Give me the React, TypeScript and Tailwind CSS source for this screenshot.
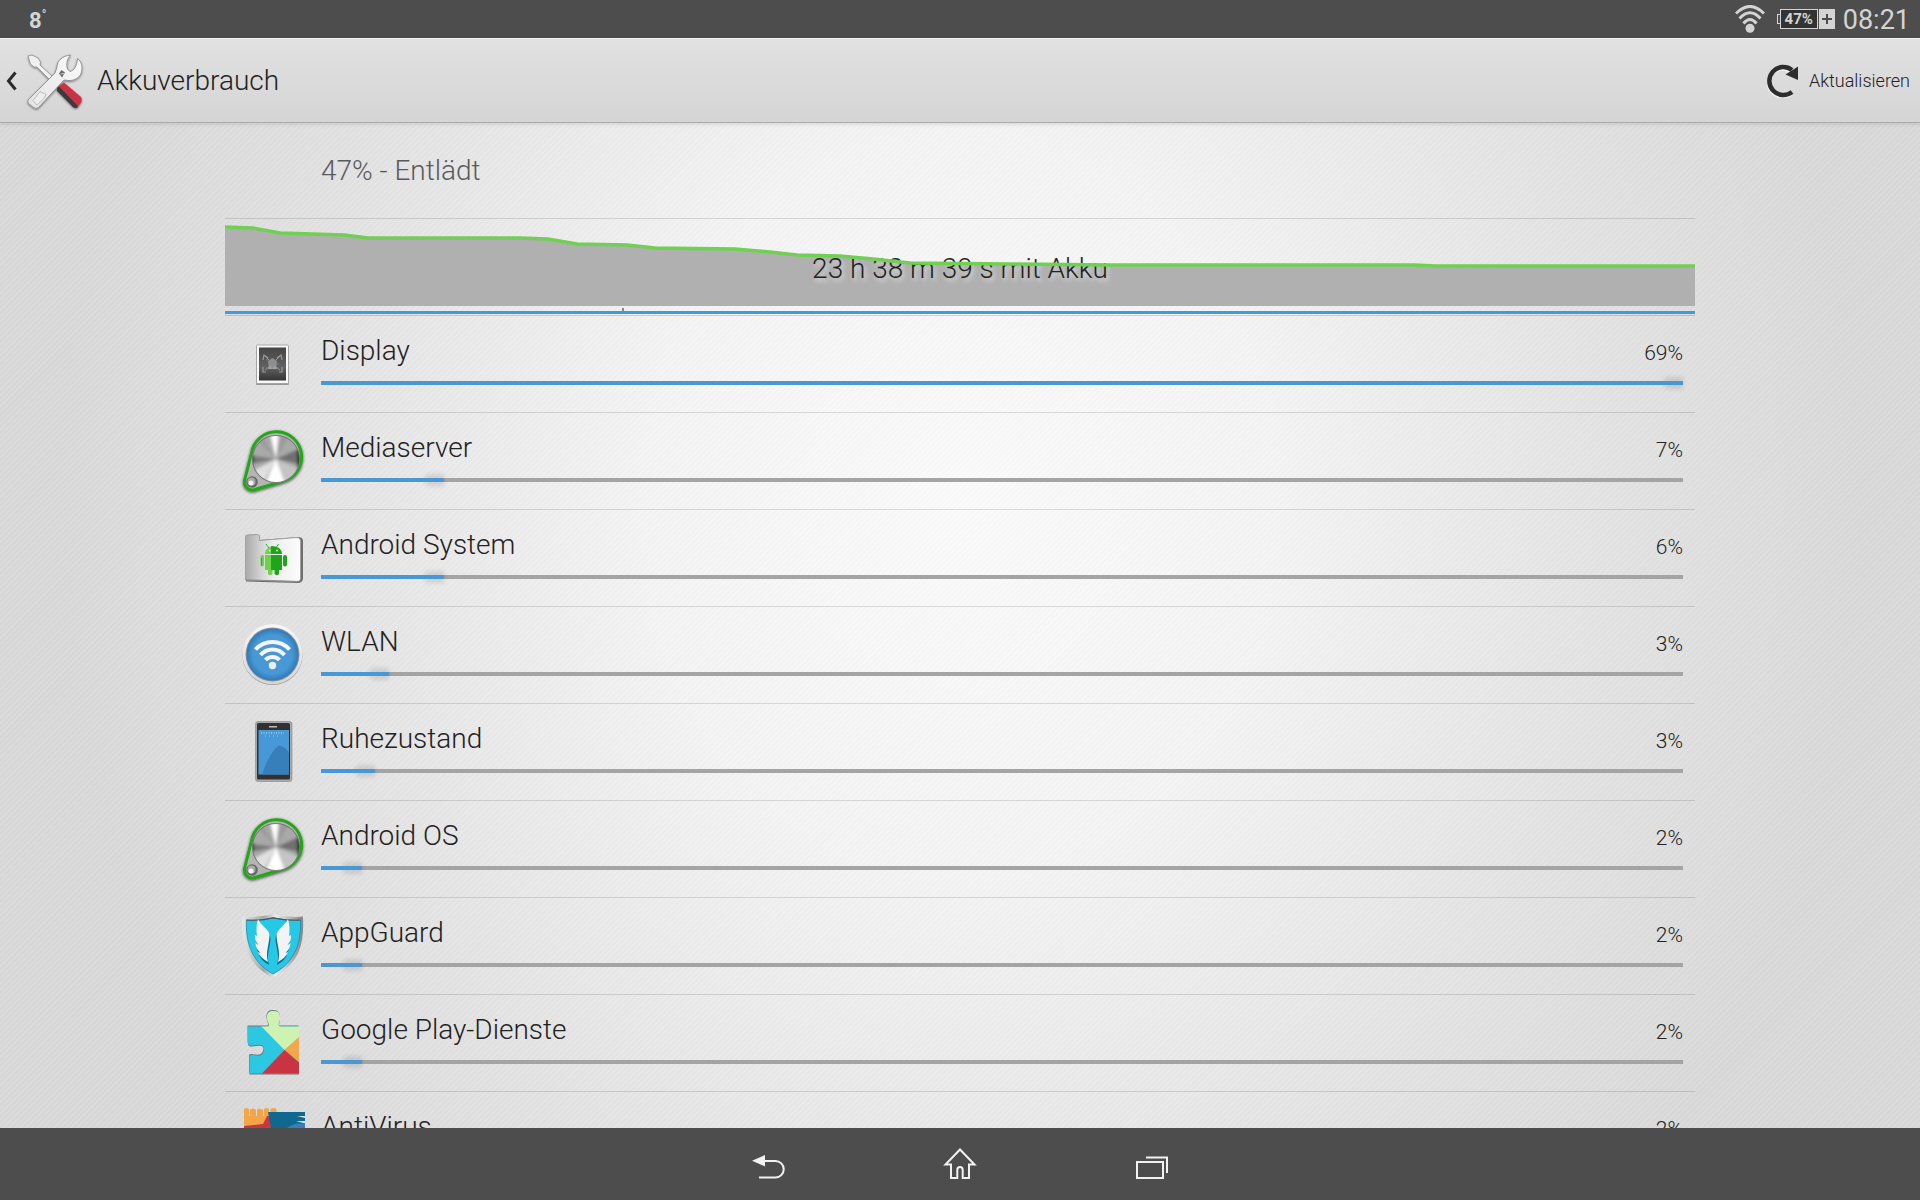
import React from "react";

type IconProps = { className?: string };

function ToolsIcon() {
  return (
    <svg viewBox="0 0 64 64" className="size-16" aria-hidden="true">
      <defs>
        <linearGradient id="steel" x1="0" y1="1" x2="1" y2="0">
          <stop offset="0" stopColor="#e2e2e2" />
          <stop offset="1" stopColor="#fbfbfb" />
        </linearGradient>
        <filter id="toolShadow" x="-20%" y="-20%" width="140%" height="140%">
          <feDropShadow dx="0" dy="1" stdDeviation="1" floodOpacity="0.45" />
        </filter>
      </defs>
      <g filter="url(#toolShadow)">
        <path d="M4 7 L8 6 L14 9 L16.500 13 L16 16 L28 27 L25 30 L13 18 L10 18 L6.500 15 Z" fill="#f0f0f0" stroke="#8d8d8d" strokeWidth="0.8" />
        <path d="M33 38 L40 33.500 L57 48 Q58.500 50 57.500 53 L54 58 Q51.500 60 49 58 Z" fill="#cb3244" />
        <path d="M33 38 L35 37.500 L52 55 L54 58 Q51.500 60 49 58 L33 42 Z" fill="#3a3a3a" />
        <path
          d="M33 18 C33 12 38 7 46.500 6 C43 10 42 15 43.500 20 L46 22.500 C50 21.500 53 17 53.500 9.500 C58 13 58.500 18 57.500 23 C56 29 50 32 44 31.500 L40 31 L14.500 58.500 Q12 60.500 9.500 58.500 L4.500 54.500 Q3 52.500 4.500 50.500 L31 24 Z"
          fill="url(#steel)"
          stroke="#8a8a8a"
          strokeWidth="0.9"
        />
        <path d="M9 51.500 L16 42.500 L22 45.500 L20.500 49 L13 56 Z" fill="#ededed" stroke="#b8b8b8" strokeWidth="0.9" />
        <path d="M35 24.500 L37.500 21 L41 23.500 L38 28.500 Z" fill="#6b6b6b" />
        <path d="M36.500 25 L40 24.500" stroke="#ccc" strokeWidth="1" />
      </g>
    </svg>
  );
}

function DisplayIcon({ className }: IconProps) {
  return (
    <svg viewBox="0 0 64 64" className={className} aria-hidden="true">
      <defs>
        <linearGradient id="panel" x1="0" y1="0" x2="0" y2="1">
          <stop offset="0" stopColor="#454545" />
          <stop offset="0.6" stopColor="#626262" />
          <stop offset="1" stopColor="#333" />
        </linearGradient>
      </defs>
      <rect x="15" y="14" width="33" height="39" rx="1" fill="#777" opacity="0.7" />
      <rect x="15.500" y="13" width="32" height="38.500" rx="1" fill="#f8f8f8" stroke="#9a9a9a" strokeWidth="0.8" />
      <rect x="18" y="15.500" width="27" height="33" fill="url(#panel)" />
      <g fill="none" stroke="#9a9a9a" strokeWidth="1.200">
        <path d="M22 28 L23 23 L27 26 M41 28 L40 23 L36 26 M41 35 V40 H38 M25 40 H22 V35" />
        <path d="M24 24 L28 28 M39 24 L35 28 M24 38 L28 35 M39 38 L35 35" strokeWidth="1" />
      </g>
      <path d="M27 29 L31.500 26 L36 29 L35.500 34 L31.500 37 L27.500 34 Z" fill="#8e8e8e" />
      <path d="M27 37 L29 33 L31.500 37 L34 33 L36 37 Z" fill="#a2a2a2" />
      <path d="M26 27 V29 M37 31 V33 M26 35 V36" stroke="#4c8ec4" strokeWidth="1" />
    </svg>
  );
}

function ProcessIcon({ className }: IconProps) {
  return (
    <svg viewBox="0 0 64 64" className={className} overflow="visible" aria-hidden="true">
      <defs>
        <clipPath id="knob">
          <circle cx="35" cy="30" r="23.500" />
        </clipPath>
        <filter id="knobBlur" x="-20%" y="-20%" width="140%" height="140%">
          <feGaussianBlur stdDeviation="1.800" />
        </filter>
        <filter id="knobShadow" x="-20%" y="-20%" width="140%" height="140%">
          <feDropShadow dx="0" dy="1" stdDeviation="1.500" floodOpacity="0.7" />
        </filter>
      </defs>
      <path
        d="M10.500 24 A25.200 25.200 0 1 1 41 52.500 L13 60.800 A8 8 0 0 1 3.700 51 Z"
        fill="#b4b4b4"
        stroke="#21a816"
        strokeWidth="3"
        strokeLinejoin="round"
        filter="url(#knobShadow)"
      />
      <circle cx="35" cy="30" r="24" fill="#858585" />
      <g clipPath="url(#knob)">
        <g filter="url(#knobBlur)">
          <rect x="5" y="0" width="60" height="60" fill="#a9a9a9" />
          <path d="M35 30 L62 18 V36 Z" fill="#707070" />
          <path d="M35 30 L6 26 V36 Z" fill="#777" />
          <path d="M35 30 L8 2 H18 Z" fill="#9a9a9a" />
          <path d="M35 30 L28 0 H38 Z" fill="#fff" />
          <path d="M35 30 L42 0 H52 Z" fill="#9a9a9a" />
          <path d="M35 30 L62 42 L46 60 Z" fill="#c4c4c4" />
          <path d="M35 30 L46 60 H22 Z" fill="#fff" />
          <path d="M35 30 L20 58 L8 44 Z" fill="#e0e0e0" />
          <path d="M56 20 H60 V38 H56 Z" fill="#333" />
          <path d="M10 26 H13 V34 H10 Z" fill="#444" />
        </g>
      </g>
      <circle cx="35" cy="30" r="23.500" fill="none" stroke="#6f6f6f" strokeWidth="0.8" />
      <circle cx="11" cy="53" r="5.800" fill="#666" />
      <circle cx="10.500" cy="52.500" r="4" fill="#aaa" />
      <circle cx="10" cy="54" r="2.500" fill="#f2f2f2" />
    </svg>
  );
}

function FolderIcon({ className }: IconProps) {
  return (
    <svg viewBox="0 0 64 64" className={className} aria-hidden="true">
      <defs>
        <linearGradient id="folder" x1="0" y1="0" x2="1" y2="0">
          <stop offset="0" stopColor="#a9a9a9" />
          <stop offset="0.250" stopColor="#cfcfcf" />
          <stop offset="0.500" stopColor="#ededed" />
          <stop offset="1" stopColor="#fcfcfc" />
        </linearGradient>
      </defs>
      <path d="M6 9 L17 8.500 L19 10 V14 L58 11 Q62 11.500 62 15 V53 Q61 57 57 57 L5 55.500 Z" fill="#6e6e6e" />
      <path d="M4.500 10.500 Q4.500 9 6 9 L16.500 8.500 L18.500 10 V14.500 L56 11.500 Q59.500 11.500 59.500 15 V53 Q59 55.500 56 55.500 L4.500 54 Z" fill="url(#folder)" stroke="#9b9b9b" strokeWidth="0.8" />
      <path d="M5 54 L58 55.500" stroke="#8c8c8c" strokeWidth="1" />
      <g fill="#6fd04c">
        <path d="M32.500 20 C27 20.500 24 24 24 28 H32.500 Z" />
        <path d="M24 29 H32.500 V44 H31.500 V48 Q29 50.500 27 48 V44 H24 Z" />
        <rect x="19.500" y="29" width="3.500" height="11.500" rx="1.700" />
      </g>
      <g fill="#1fa519">
        <path d="M30 20 C38 20 41 24 41 28 H30 Z" />
        <path d="M30 29 H41 V44 H38 V48 Q36 50.500 33.500 48 V44 H30 Z" />
        <rect x="42" y="29" width="4" height="11.500" rx="1.900" />
        <path d="M25 18 L28 22 M37.500 18 L35 22" stroke="#1fa519" strokeWidth="0.900" />
      </g>
      <path d="M20.500 32 V40" stroke="#36ab25" strokeWidth="1" />
      <circle cx="28.500" cy="24.500" r="0.900" fill="#fff" />
      <circle cx="36" cy="24.500" r="0.900" fill="#fff" />
    </svg>
  );
}

function WlanIcon({ className }: IconProps) {
  return (
    <svg viewBox="0 0 64 64" className={className} aria-hidden="true">
      <defs>
        <linearGradient id="ring" x1="0" y1="0" x2="0" y2="1">
          <stop offset="0" stopColor="#f8f8f8" />
          <stop offset="1" stopColor="#d5d5d5" />
        </linearGradient>
        <radialGradient id="disc">
          <stop offset="0.750" stopColor="#4898d6" />
          <stop offset="1" stopColor="#2f7ab8" />
        </radialGradient>
      </defs>
      <circle cx="31.500" cy="32" r="30" fill="#9b9b9b" />
      <circle cx="31.500" cy="31.200" r="30" fill="url(#ring)" />
      <circle cx="31.500" cy="31.500" r="27" fill="#8d9298" />
      <circle cx="31.500" cy="31.500" r="26" fill="url(#disc)" />
      <g fill="none" stroke="#f5f5f5" strokeWidth="4">
        <path d="M14.500 26.500 A23 23 0 0 1 48.500 26.500" />
        <path d="M19.500 32 A16 16 0 0 1 43.500 32" />
        <path d="M24.500 37 A9.500 9.500 0 0 1 38.500 37" />
      </g>
      <circle cx="31.500" cy="42.500" r="3.700" fill="#eee" />
    </svg>
  );
}

function PhoneIcon({ className }: IconProps) {
  return (
    <svg viewBox="0 0 64 64" className={className} aria-hidden="true">
      <rect x="14.500" y="1.500" width="36.500" height="60" rx="2.500" fill="#a8a8a8" stroke="#8a8a8a" strokeWidth="0.6" />
      <rect x="16" y="3" width="33" height="56.500" rx="1.500" fill="#323232" />
      <rect x="17.500" y="10" width="30.500" height="44.500" fill="#4798d7" />
      <path d="M21 54.500 C25 42 32 29 38 25.500 Q44 26 48 33 V54.500 Z" fill="#367fba" />
      <rect x="28" y="6" width="8" height="1.500" fill="#bbb" />
      <path d="M20 13 H43" stroke="#a8c9e4" strokeWidth="1.500" strokeDasharray="1 1.500" />
      <path d="M24 16 H38" stroke="#a8c9e4" strokeWidth="1" strokeDasharray="1 3" />
    </svg>
  );
}

function ShieldIcon({ className }: IconProps) {
  const wing =
    "M18 5 C21 12 29 15 29.500 21 C29.500 30 25 38 28 48 C23 45 19.500 42 18 38 L20.500 39 C17.500 36 15.500 33 15.500 29 L18.500 31 C16 28 14.500 25 15 21 L17 22 C16 16 16.500 10 18 5 Z";
  return (
    <svg viewBox="0 0 64 64" className={className} overflow="visible" aria-hidden="true">
      <defs>
        <linearGradient id="rim" x1="0" y1="0" x2="1" y2="0">
          <stop offset="0" stopColor="#e9e9e9" />
          <stop offset="0.350" stopColor="#a5a5a5" />
          <stop offset="0.550" stopColor="#eee" />
          <stop offset="1" stopColor="#858585" />
        </linearGradient>
      </defs>
      <path d="M1.500 2.500 Q16 4 32 0 Q48 4 62 2.500 C63 28 60 49 32 63.500 C5 51 0 26 1.500 2.500 Z" fill="url(#rim)" />
      <path d="M5.500 6 Q20 7 32 3.800 Q46 7 59.500 6 C60 27 56 47 32 60 C9 47 4.500 26 5.500 6 Z" fill="#26c8e6" stroke="#168ab0" strokeWidth="0.8" />
      <path d="M5.500 6 Q20 7 32 3.800 Q46 7 59.500 6" fill="none" stroke="#555" strokeWidth="1.200" />
      <g fill="#0d6f97">
        <path d={wing} transform="translate(0 3)" />
        <path d={wing} transform="translate(64 3) scale(-1 1)" />
      </g>
      <g fill="#f3f3f3">
        <path d={wing} transform="translate(-1 0)" />
        <path d={wing} transform="translate(65 0) scale(-1 1)" />
      </g>
    </svg>
  );
}

function PuzzleIcon({ className }: IconProps) {
  const outline =
    "M7 15.500 H27 Q28 15 28 13 C26 10 25.500 7 26.500 3 Q27.500 0 32 0 Q37.500 0 38.500 3 C39.500 7 39 10 37.500 13 Q37.500 15 39 15.500 H58 V62.500 H8.500 V45 Q9 43.500 12 44 Q20 46 22 42 Q24 38 22 35 Q20 33 12 34.500 Q7 35 7 32 Z";
  return (
    <svg viewBox="0 0 64 64" className={className} overflow="visible" aria-hidden="true">
      <defs>
        <clipPath id="puzzle">
          <path d={outline} />
        </clipPath>
      </defs>
      <path d={outline} fill="#777" transform="translate(-0.5 -1)" />
      <path d={outline} fill="#777" transform="translate(0 1)" />
      <g clipPath="url(#puzzle)">
        <rect x="0" y="-2" width="64" height="68" fill="#2cc8e2" />
        <path d="M19 14 L26 -2 H60 V25 L43.500 39 Z" fill="#cdf2b2" />
        <path d="M58.500 25.500 V52 L43.500 39 Z" fill="#f3a64b" />
        <path d="M43.500 39 L58.500 52 V64 H19.500 Z" fill="#c93443" />
      </g>
    </svg>
  );
}

function FistIcon({ className }: IconProps) {
  return (
    <svg viewBox="0 0 64 64" className={className} aria-hidden="true">
      <path d="M3 1 Q5 -1 8 1 V8 H9 V2 Q11.500 -1 15 2 V8 H16 V2 Q18.500 -1 22 2 V8 H23 V1 Q25.500 -1 28 1 V8 H29.500 V1 Q32 -1 35.500 1 V40 H3 Z" fill="#f3a548" />
      <path d="M3 18 L22 16 L26 8 H36 V40 H3 Z" fill="#cb3540" />
      <path d="M27 4 H64 V8 H56 L64 10 V13 H55 L64 15.500 V40 H34 Z" fill="#0f6890" />
      <path d="M42 24 Q50 14 64 15.500 V40 H42 Z" fill="#367fba" />
    </svg>
  );
}

const consumers = [
  { name: "Display", percent: 69, level: 100, Icon: DisplayIcon },
  { name: "Mediaserver", percent: 7, level: 9, Icon: ProcessIcon },
  { name: "Android System", percent: 6, level: 9, Icon: FolderIcon },
  { name: "WLAN", percent: 3, level: 5, Icon: WlanIcon },
  { name: "Ruhezustand", percent: 3, level: 4, Icon: PhoneIcon },
  { name: "Android OS", percent: 2, level: 3, Icon: ProcessIcon },
  { name: "AppGuard", percent: 2, level: 3, Icon: ShieldIcon },
  { name: "Google Play-Dienste", percent: 2, level: 3, Icon: PuzzleIcon },
  { name: "AntiVirus", percent: 2, level: 3, Icon: FistIcon },
];

const chartLine =
  "M0 8 L28 9 L55 14 L119 16 L143 19 L295 19 L323 20 L352 25 L402 26 L430 29 L510 30 L545 33 L572 36 L615 37 L648 40 L685 44 L785 45 L886 46 L1190 46 L1210 47 L1470 47";

function StatusBar() {
  return (
    <div className="flex h-[38px] shrink-0 items-center justify-between bg-[#4d4d4d] pr-[10px] pl-[29px] text-[#d4d4d4]">
      <div className="flex items-start pt-1 text-[22px] leading-6 font-bold">
        <span>8</span>
        <span className="text-xs leading-3">°</span>
      </div>
      <div className="flex items-center">
        <svg viewBox="0 0 30 28" className="mr-3 h-7 w-[30px]" aria-label="WLAN">
          <g fill="none" stroke="#d4d4d4" strokeWidth="3">
            <path d="M1 8.500 Q15 -5.500 29 8.500" />
            <path d="M4.500 13.500 Q15 2 25.500 13.500" />
            <path d="M8.500 18.500 Q15 10.500 21.500 18.500" />
          </g>
          <circle cx="15" cy="23.300" r="4.500" fill="#d4d4d4" />
        </svg>
        <div className="flex items-center">
          <span className="h-[10px] w-[3px] border border-r-0 border-[#d4d4d4]" />
          <span className="flex h-5 w-[38px] items-center justify-center border border-[#d4d4d4] bg-[#333] text-[15px] font-bold">
            47%
          </span>
          <span className="ml-px flex h-5 w-4 items-center justify-center bg-[#d4d4d4]">
            <svg viewBox="0 0 10 10" className="size-[10px]" aria-hidden="true">
              <path d="M5 0 V10 M0 5 H10" stroke="#4d4d4d" strokeWidth="2" />
            </svg>
          </span>
        </div>
        <time className="ml-2 pt-px text-[27px] leading-[38px]">08:21</time>
      </div>
    </div>
  );
}

function Header() {
  return (
    <header className="relative flex h-[85px] shrink-0 items-center justify-between border-t border-b border-t-[#f4f4f4] border-b-[#ababab] bg-linear-to-b from-[#e1e1e1] to-[#d5d5d5] pr-[10px] pl-[6px] shadow-[0_1px_4px_rgba(0,0,0,0.12)]">
      <button type="button" className="flex items-center text-[#222]">
        <svg viewBox="0 0 12 20" className="mr-[6px] h-5 w-3" aria-hidden="true">
          <path d="M9.500 1.500 L2.500 10 L9.500 18.500" fill="none" stroke="#2b2b2b" strokeWidth="3" />
        </svg>
        <ToolsIcon />
        <h1 className="ml-[9px] text-[28px] font-[350]">Akkuverbrauch</h1>
      </button>
      <button type="button" className="flex items-center text-lg font-[350] text-[#222]">
        <svg viewBox="0 0 32 34" className="mr-[10px] h-[34px] w-8" aria-hidden="true">
          <path d="M23.500 29 A14 14 0 1 1 23 5.500" fill="none" stroke="#fff" strokeWidth="4.500" transform="translate(0 1)" opacity="0.6" />
          <path d="M25 28 A14 14 0 1 1 25 6" fill="none" stroke="#2d2d2d" strokeWidth="4.500" />
          <path d="M31 2.500 V16 L18.500 10.500 Z" fill="#2d2d2d" />
        </svg>
        Aktualisieren
      </button>
    </header>
  );
}

function HistoryChart() {
  return (
    <div className="relative flex h-[97px] items-center justify-center border-b border-black/15">
      <svg viewBox="0 0 1470 96" preserveAspectRatio="none" className="absolute inset-0 h-24 w-full" aria-hidden="true">
        <path d={chartLine + " V87 H0 Z"} fill="#b0b0b0" />
        <path d="M397 89 H399 V92 H397 Z" fill="#888" />
        <path d="M0 92 H1470 V95 H0 Z" fill="#4898d6" />
      </svg>
      <p className="relative pt-1 text-[28px] font-[350] text-[#222] [text-shadow:2px_3px_4px_rgba(255,255,255,0.6)]">
        23 h 38 m 39 s mit Akku
      </p>
      <svg viewBox="0 0 1470 96" preserveAspectRatio="none" className="absolute inset-0 h-24 w-full" aria-hidden="true">
        <path d={chartLine} fill="none" stroke="#6fd052" strokeWidth="3.500" />
      </svg>
    </div>
  );
}

function NavigationBar() {
  return (
    <nav className="flex h-[72px] shrink-0 items-center justify-center gap-[152px] bg-[#4d4d4d]">
      <button type="button" aria-label="Zurück">
        <svg viewBox="0 0 40 40" className="size-10" fill="none">
          <path d="M16 17 H27.500 A8.200 8.200 0 0 1 27.500 33.500 H11" stroke="#f2f2f2" strokeWidth="2" />
          <path d="M4 16.700 L17 11 V22.400 Z" fill="#f2f2f2" />
        </svg>
      </button>
      <button type="button" aria-label="Startseite">
        <svg viewBox="0 0 40 40" className="size-10" fill="none" stroke="#f2f2f2" strokeWidth="2">
          <path d="M20 5.500 L5.500 20.500 H11 V34 H17.300 V26 Q17.300 23 20 23 Q22.700 23 22.700 26 V34 H29 V20.500 H34.500 Z" />
        </svg>
      </button>
      <button type="button" aria-label="Letzte Apps">
        <svg viewBox="0 0 40 40" className="size-10" fill="none" stroke="#f2f2f2" strokeWidth="2">
          <path d="M5 18 H31 V34 H5 Z" />
          <path d="M14 13.500 H35 V29" />
        </svg>
      </button>
    </nav>
  );
}

export default function App() {
  return (
    <div className="flex h-screen flex-col overflow-hidden font-[Roboto,sans-serif]">
      <StatusBar />
      <Header />
      <main className="min-h-0 flex-1 overflow-hidden bg-[repeating-linear-gradient(135deg,rgba(255,255,255,0.08)_0px,rgba(255,255,255,0.08)_1px,rgba(0,0,0,0.01)_2px,rgba(0,0,0,0.01)_4px),radial-gradient(ellipse_900px_1050px_at_50%_38%,#fbfbfb_0%,#f4f4f4_35%,#e4e4e4_70%,#d9d9d9_100%)] px-[225px]">
        <h2 className="flex h-24 items-center border-b border-black/12 pl-24 text-[28px] font-[350] text-[#5a5a5e]">
          47% - Entlädt
        </h2>
        <HistoryChart />
        <ul>
          {consumers.map(({ name, percent, level, Icon }) => (
            <li key={name} className="flex h-[97px] items-center border-b border-black/12 pr-3 pl-4">
              <Icon className="mr-4 size-16 shrink-0" />
              <div className="flex-1">
                <div className="flex items-baseline justify-between pt-1 text-[#222]">
                  <span className="text-[28px] leading-9 font-[350]">{name}</span>
                  <span className="text-[21px] leading-9 font-[350]">{percent}%</span>
                </div>
                <div
                  role="progressbar"
                  aria-label={name}
                  aria-valuenow={percent}
                  aria-valuemin={0}
                  aria-valuemax={100}
                  className="mt-[10px] mb-[14px] h-1 bg-[#a4a4a4]"
                >
                  <div className="relative h-full" style={{ width: level + "%" }}>
                    <div className="absolute -top-1 right-0 h-3 w-5 rounded-l-full bg-black/10 blur-[2px]" />
                    <div className="relative h-full bg-[#4898d6]" />
                  </div>
                </div>
              </div>
            </li>
          ))}
        </ul>
      </main>
      <NavigationBar />
    </div>
  );
}
